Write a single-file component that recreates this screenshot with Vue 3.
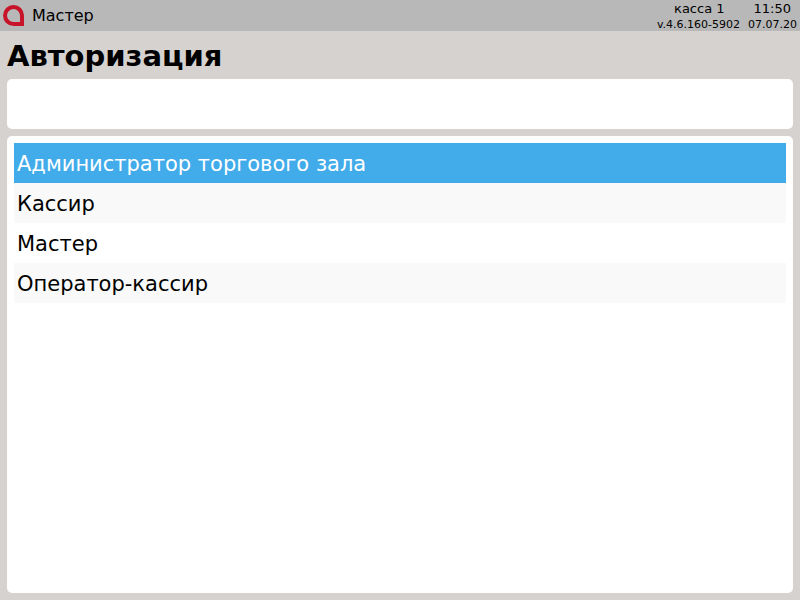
<script setup>
const roles = ['Администратор торгового зала', 'Кассир', 'Мастер', 'Оператор-кассир']
</script>

<template>
  <div class="screen">
    <header class="topbar">
      <svg class="logo" width="21" height="21" viewBox="0 0 21 21">
        <path fill-rule="evenodd" fill="#c8142a" d="M10.5 0a10.5 10.5 0 0 0 0 21H21V10.5A10.5 10.5 0 0 0 10.5 0zM10.5 4a6.5 6.5 0 0 0 0 13H17V10.5A6.5 6.5 0 0 0 10.5 4z" />
      </svg>
      <span class="user">Мастер</span>
      <div class="info">
        <div class="info-top"><span>касса 1</span><span class="time">11:50</span></div>
        <div class="info-bottom"><span>v.4.6.160-5902</span><span>07.07.20</span></div>
      </div>
    </header>
    <h1 class="title">Авторизация</h1>
    <div class="card search"></div>
    <div class="card list">
      <div v-for="(role, i) in roles" :key="role" class="row" :class="{ active: i === 0, odd: i % 2 === 1 }">{{ role }}</div>
    </div>
  </div>
</template>

<style scoped>
.screen {
  width: 800px;
  height: 600px;
  display: flex;
  flex-direction: column;
  background: #d6d2cf;
  font-family: "DejaVu Sans", sans-serif;
  color: #000;
  overflow: hidden;
}
.topbar {
  height: 31px;
  flex: none;
  display: flex;
  align-items: center;
  background: #b8b8b8;
  padding: 0 3px;
  box-sizing: border-box;
}
.logo {
  flex: none;
}
.user {
  margin-left: 8px;
  font-size: 16px;
}
.info {
  margin-left: auto;
  padding-top: 2px;
  display: flex;
  flex-direction: column;
  align-items: flex-end;
}
.info-top {
  display: flex;
  font-size: 13px;
  line-height: 16px;
  padding-right: 6px;
  gap: 29px;
}
.info-bottom {
  display: flex;
  font-size: 11px;
  line-height: 15px;
  gap: 8px;
}
.title {
  margin: 0;
  height: 48px;
  padding-left: 7px;
  font-size: 29px;
  font-weight: bold;
  line-height: 50px;
}
.card {
  background: #fff;
  border-radius: 5px;
  margin: 0 7px;
}
.search {
  height: 50px;
  flex: none;
  margin-bottom: 7px;
}
.list {
  height: 457px;
  flex: none;
  padding: 7px;
  box-sizing: border-box;
}
.row {
  height: 40px;
  line-height: 42px;
  padding-left: 3px;
  font-size: 21px;
}
.row.odd {
  background: #f9f9f9;
}
.row.active {
  background: #42abea;
  color: #fff;
}
</style>
